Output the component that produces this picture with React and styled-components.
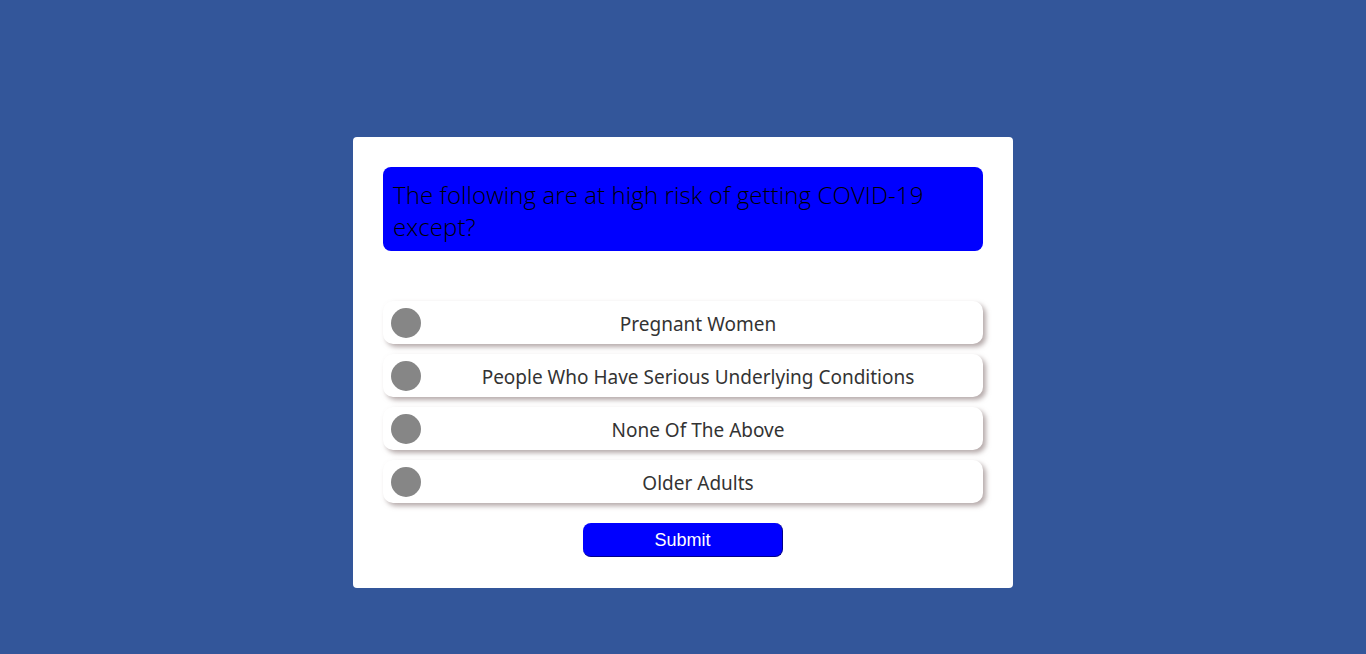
import React from "react";
import styled, { createGlobalStyle } from "styled-components";

const Global = createGlobalStyle`
  html, body { margin: 0; padding: 0; }
  body {
    background: #33569a;
    font-family: "Noto Sans", "Open Sans", sans-serif;
    min-height: 654px;
  }
`;

const Page = styled.div`
  display: flex;
  justify-content: center;
  padding-top: 137px;
`;

const Card = styled.div`
  width: 600px;
  background: #fff;
  border-radius: 4px;
  padding: 30px 30px 31px;
  display: flex;
  flex-direction: column;
`;

const Question = styled.div`
  background: #0000ff;
  color: #000;
  border-radius: 8px;
  padding: 12px 10px 8px 10px;
  font-family: "Open Sans", "Noto Sans", sans-serif;
  font-weight: 300;
  font-size: 24px;
  letter-spacing: 0.1px;
  line-height: 32px;
  min-height: 64px;
  margin-bottom: 50px;
`;

const Options = styled.div`
  display: flex;
  flex-direction: column;
  gap: 10px;
`;

const Option = styled.label`
  display: flex;
  align-items: center;
  height: 43px;
  background: #fff;
  border-radius: 10px;
  box-shadow: 3px 3px 5px rgba(120, 100, 100, 0.55);
  padding-left: 8px;
  cursor: pointer;
`;

const Dot = styled.span`
  width: 30px;
  height: 30px;
  border-radius: 50%;
  background: #868686;
  flex: none;
`;

const OptionText = styled.span`
  flex: 1;
  text-align: center;
  color: #333;
  font-size: 19px;
  margin-left: -8px;
  padding-top: 2px;
`;

const Submit = styled.button`
  align-self: center;
  margin-top: 20px;
  width: 200px;
  height: 34px;
  padding-top: 2px;
  background: #0000ff;
  color: #fff;
  border: none;
  border-bottom: 1px solid #00008a;
  border-right: 1px solid #00008a;
  border-radius: 8px;
  font-family: "Liberation Sans", Arial, sans-serif;
  font-weight: normal;
  font-size: 18px;
`;

const options = [
  "Pregnant Women",
  "People Who Have Serious Underlying Conditions",
  "None Of The Above",
  "Older Adults",
];

export default function App() {
  return (
    <>
      <Global />
      <Page>
        <Card>
          <Question>The following are at high risk of getting COVID-19 except?</Question>
          <Options>
            {options.map((o) => (
              <Option key={o}>
                <Dot />
                <OptionText>{o}</OptionText>
              </Option>
            ))}
          </Options>
          <Submit>Submit</Submit>
        </Card>
      </Page>
    </>
  );
}
